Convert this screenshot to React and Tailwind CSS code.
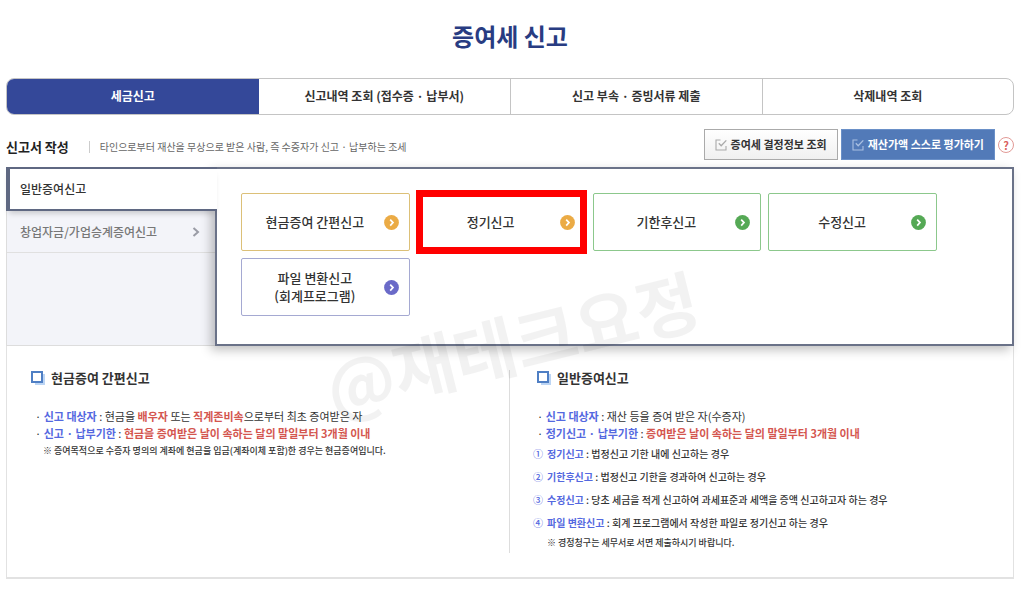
import React from "react";
import clsx from "clsx";

const tabs = ["세금신고", "신고내역 조회 (접수증 · 납부서)", "신고 부속 · 증빙서류 제출", "삭제내역 조회"];

const reports = [
  { lines: ["현금증여 간편신고"], border: "border-[#dcc078]", dot: "text-[#ebab45]" },
  { lines: ["정기신고"], border: "border-[#dcc078]", dot: "text-[#ebab45]", marked: true },
  { lines: ["기한후신고"], border: "border-[#8cc88c]", dot: "text-[#55a955]" },
  { lines: ["수정신고"], border: "border-[#8cc88c]", dot: "text-[#55a955]" },
  { lines: ["파일 변환신고", "(회계프로그램)"], border: "border-[#a5a9d2]", dot: "text-[#6a6ac8]" },
];

const kinds = [
  { no: "①", name: "정기신고", text: "법정신고 기한 내에 신고하는 경우" },
  { no: "②", name: "기한후신고", text: "법정신고 기한을 경과하여 신고하는 경우" },
  { no: "③", name: "수정신고", text: "당초 세금을 적게 신고하여 과세표준과 세액을 증액 신고하고자 하는 경우" },
  { no: "④", name: "파일 변환신고", text: "회계 프로그램에서 작성한 파일로 정기신고 하는 경우" },
];

const CheckBoxIcon = ({ className }) => (
  <svg viewBox="0 0 12 12" className={clsx("w-3 h-3 shrink-0", className)} fill="none" stroke="currentColor" aria-hidden="true">
    <path d="M5.5 1H1v10h10V7" strokeWidth="1.1" />
    <path d="M3.8 4.3 6.2 6.8 11.3 1.4" strokeWidth="1.3" />
  </svg>
);

const ArrowDot = ({ className }) => (
  <svg viewBox="0 0 15 15" className={clsx("w-[15px] h-[15px] shrink-0", className)} aria-hidden="true">
    <circle cx="7.5" cy="7.5" r="7.4" fill="currentColor" />
    <path d="M6.2 4.6 9 7.6 6.2 10.6" fill="none" stroke="#fff" strokeWidth="1.7" />
  </svg>
);

const SquareIcon = () => (
  <svg viewBox="0 0 14 14" className="w-3.5 h-3.5 shrink-0" aria-hidden="true">
    <path d="M4 3h10v11H4z" fill="#bcd5f4" />
    <path d="M1 1h10v10H1z" fill="#fff" stroke="#4f7fc4" strokeWidth="2" />
  </svg>
);

const Blue = ({ children }) => <b className="font-bold text-[#5468e0]">{children}</b>;
const Red = ({ children }) => <b className="font-bold text-[#d4564f]">{children}</b>;

const InfoTitle = ({ children }) => (
  <h3 className="flex items-center gap-1.5 text-[13px] leading-4 font-bold text-[#333]">
    <SquareIcon />
    {children}
  </h3>
);

export default function App() {
  return (
    <main className="relative overflow-hidden bg-white pl-1.5 pr-2.5 pb-4 text-[#333] font-['Noto_Sans_CJK_KR','Noto_Sans',sans-serif]">
      <h1 className="pt-5 pb-[26px] text-center text-2xl font-bold text-[#283c82]">증여세 신고</h1>

      {/* Tabs */}
      <nav className="grid grid-cols-4 h-[37px] rounded-lg border border-[#c4c4c4] overflow-hidden">
        {tabs.map((tab, i) => (
          <button
            key={tab}
            type="button"
            className={clsx(
              "pb-0.5 text-xs font-bold",
              i === 0 && "bg-[#344899] text-white",
              i > 1 && "border-l border-[#c4c4c4]"
            )}
          >
            {tab}
          </button>
        ))}
      </nav>

      {/* Section heading */}
      <div className="mt-3.5 mb-[7px] flex items-center h-[31px]">
        <h2 className="pt-1 text-[13px] font-bold text-[#222]">신고서 작성</h2>
        <p className="mt-1 ml-5 pl-2.5 border-l border-[#ccc] text-[10px] leading-3 text-[#666]">
          타인으로부터 재산을 무상으로 받은 사람, 즉 수증자가 신고 · 납부하는 조세
        </p>
        <div className="ml-auto flex items-center gap-[3px] text-[11px] font-bold">
          <button type="button" className="flex items-center gap-1 h-[31px] px-2.5 border border-[#aaa] bg-linear-to-b from-white to-[#f0f0f0]">
            <CheckBoxIcon className="text-[#aaa]" />
            증여세 결정정보 조회
          </button>
          <button type="button" className="flex items-center gap-1 h-[31px] px-2.5 border border-[#6a90c8] bg-[#527ab8] text-white">
            <CheckBoxIcon className="text-[#a9c0e2]" />
            재산가액 스스로 평가하기
          </button>
          <button type="button" className="w-4 h-4 rounded-full border border-[#e29a96] leading-3 text-[#d9605c]">
            ?
          </button>
        </div>
      </div>

      {/* Report picker */}
      <section className="flex h-[179px]">
        <div className="w-[209px] shrink-0 border-l border-b border-[#ddd] bg-[#f3f4f9]">
          <button
            type="button"
            className="relative z-10 -ml-px w-[211px] h-11 pl-2.5 text-left text-xs font-medium bg-white border-t-2 border-b-2 border-l-4 border-[#5f6882] shadow-[0_5px_6px_-3px_rgba(0,0,0,0.2)]"
          >
            일반증여신고
          </button>
          <button
            type="button"
            className="flex items-center justify-between w-full h-[42px] pl-[13px] pr-[15px] border-b border-[#e0e0e0] text-xs font-medium text-[#777]"
          >
            창업자금/가업승계증여신고
            <svg viewBox="0 0 8 10" className="w-2 h-2.5" fill="none" stroke="#9a9ca6" strokeWidth="2" aria-hidden="true">
              <path d="M1.5 1 6 5 1.5 9" />
            </svg>
          </button>
        </div>
        <div className="flex-1 border-2 border-[#6a7288] bg-white pt-6 pl-6 pr-[75px] shadow-[-4px_4px_10px_rgba(0,0,0,0.25)]">
          <div className="grid grid-cols-4 gap-[7px]">
            {reports.map((r) => (
              <button
                key={r.lines[0]}
                type="button"
                className={clsx("relative flex items-center h-[58px] pl-1 pr-2.5 rounded-xs border bg-white text-[13px] leading-[18px] font-medium", r.border)}
              >
                <span className="flex-1">
                  {r.lines.map((line) => (
                    <span key={line} className="block">{line}</span>
                  ))}
                </span>
                <ArrowDot className={r.dot} />
                {r.marked && <span className="absolute -inset-x-0.5 -inset-y-1 border-[7px] border-[#f00]" />}
              </button>
            ))}
          </div>
        </div>
      </section>

      {/* Guide */}
      <section className="grid grid-cols-2 pt-6 pb-6 border-x border-b-2 border-[#e2e2e2] text-[11px] leading-[17px]">
        <div className="min-h-[183px] pl-6 border-r border-[#ddd]">
          <InfoTitle>현금증여 간편신고</InfoTitle>
          <ul className="mt-[22px] pl-1">
            <li>
              · <Blue>신고 대상자</Blue> : 현금을 <Red>배우자</Red> 또는 <Red>직계존비속</Red>으로부터 최초 증여받은 자
            </li>
            <li>
              · <Blue>신고 · 납부기한</Blue> : <Red>현금을 증여받은 날이 속하는 달의 말일부터 3개월 이내</Red>
            </li>
          </ul>
          <p className="pl-3 text-[9px] leading-[18px] font-medium">
            ※ 증여목적으로 수증자 명의의 계좌에 현금을 입금(계좌이체 포함)한 경우는 현금증여입니다.
          </p>
        </div>
        <div className="min-h-[183px] pl-[27px]">
          <InfoTitle>일반증여신고</InfoTitle>
          <ul className="mt-[22px]">
            <li>
              · <Blue>신고 대상자</Blue> : 재산 등을 증여 받은 자(수증자)
            </li>
            <li>
              · <Blue>정기신고 · 납부기한</Blue> : <Red>증여받은 날이 속하는 달의 말일부터 3개월 이내</Red>
            </li>
          </ul>
          <ol className="-ml-1 text-[10px] leading-[23px] font-medium">
            {kinds.map((k) => (
              <li key={k.no} className="flex gap-1">
                <span className="text-[#5468e0]">{k.no}</span>
                <span>
                  <Blue>{k.name}</Blue> : {k.text}
                </span>
              </li>
            ))}
          </ol>
          <p className="pl-2.5 text-[9px] leading-[18px] font-medium">※ 경정청구는 세무서로 서면 제출하시기 바랍니다.</p>
        </div>
      </section>

      {/* Watermark */}
      <div className="absolute inset-0 z-20 flex items-center justify-center pt-[88px] pointer-events-none">
        <span className="-rotate-14 whitespace-nowrap text-[68px] font-bold text-black/5">@재테크요정</span>
      </div>
    </main>
  );
}
